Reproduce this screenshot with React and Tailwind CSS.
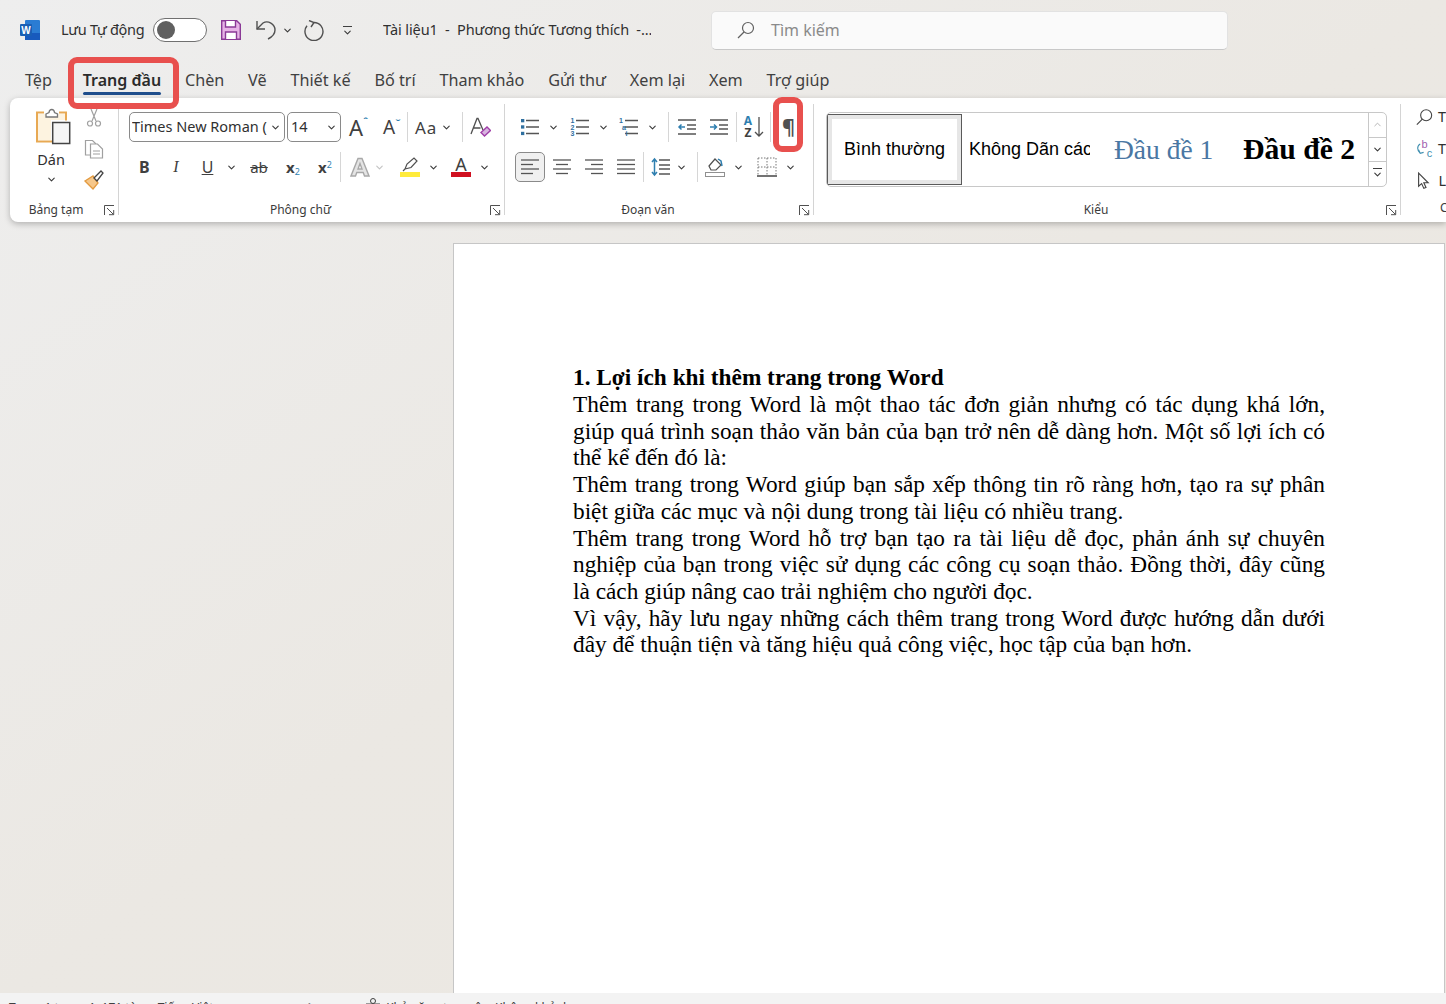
import { ChevronDown } from "lucide-react";

const Chev = ({ className = "" }) => (
  <ChevronDown size={11} strokeWidth={2.4} className={`text-[#3a3a3a] shrink-0 ${className}`} />
);

const Launcher = () => (
  <svg width="11" height="11" viewBox="0 0 11 11" fill="none" stroke="#505050">
    <path d="M.5 10V.5H10M3 3l6.5 6.5M5 9.7h4.7V5" />
  </svg>
);

const Sep = ({ className = "" }) => <div className={`w-px h-[30px] bg-[#d6d6d6] shrink-0 ${className}`} />;

const Group = ({ width, label, className = "", children }) => (
  <div className={`${width} ${className} shrink-0 h-[111px] mt-[6px] border-r border-[#d4d4d4] flex flex-col`}>
    <div className="flex-1 min-h-0">{children}</div>
    <div className="flex items-center h-[12px] pt-[2px] text-[12px] text-[#3b3b3b]">
      <div className="flex-1 text-center">{label}</div>
      <div className="w-[22px] flex justify-end pr-[3px]">
        <Launcher />
      </div>
    </div>
  </div>
);

const Lines = ({ rows }) => (
  <svg width="20" height="20" viewBox="0 0 20 20" fill="none" stroke="#555" strokeWidth="1.3">
    {rows.map((r, i) => (
      <path key={i} d={`M${r[0]} ${r[2]}H${r[1]}`} />
    ))}
  </svg>
);

const ListIcon = ({ kind }) => (
  <svg width="20" height="20" viewBox="0 0 20 20" fill="none">
    <path d="M6 3.5h13M6 10h13M6 16.5h13" stroke="#555" strokeWidth="1.3" />
    {kind === "bullet" && (
      <g fill="#2f6f9f">
        <rect x="1" y="2" width="3.3" height="3.3" />
        <rect x="1" y="8.3" width="3.3" height="3.3" />
        <rect x="1" y="14.8" width="3.3" height="3.3" />
      </g>
    )}
    {kind === "number" && (
      <g fill="#2f6f9f" fontSize="7" fontWeight="700" fontFamily="Liberation Sans" textAnchor="middle">
        <text x="2.5" y="6">1</text>
        <text x="2.5" y="12.5">2</text>
        <text x="2.5" y="19">3</text>
      </g>
    )}
    {kind === "multi" && (
      <g fill="#2f6f9f" fontSize="7" fontWeight="700" fontFamily="Liberation Sans" textAnchor="middle">
        <text x="2" y="6">1</text>
        <text x="5" y="12.5">a</text>
        <text x="7.5" y="19">i</text>
      </g>
    )}
  </svg>
);

const Indent = ({ out }) => (
  <svg width="20" height="20" viewBox="0 0 20 20" fill="none">
    <path d="M1 3h18M10 8h9M10 12h9M1 17h18" stroke="#555" strokeWidth="1.3" />
    <path d={out ? "M8 10H2M4.5 7.5 2 10l2.5 2.5" : "M1 10h6M5 7.5 7.5 10 5 12.5"} stroke="#2f7fb0" strokeWidth="1.5" />
  </svg>
);

const ClipboardGroup = () => (
  <Group width="w-[109px]" label="Bảng tạm" className="pl-[6px]">
    <div className="flex">
      <div className="w-[70px] flex flex-col items-center pt-[3px]">
        <svg className="ml-[6px]" width="38" height="38" viewBox="0 0 38 38" fill="none">
          <path d="M9 5.5H2v29h15" stroke="#e8a953" strokeWidth="2" />
          <path d="M24 5.5h7v8" stroke="#e8a953" strokeWidth="2" />
          <path d="M3 7h27v6H16v20H3z" fill="#fdf3e0" />
          <path d="M11 7l3-1.5c.5-4 5-4 5.5 0l3 1.5v3H11z" fill="#fff" stroke="#777" strokeWidth="1.3" />
          <rect x="17.7" y="15.5" width="17" height="21" fill="#f6f6f6" stroke="#444" strokeWidth="1.5" />
        </svg>
        <span className="text-[14.5px] leading-[20px] text-[#303030] mt-[4px]">Dán</span>
        <Chev className="mt-[5px]" />
      </div>
      <div className="flex flex-col items-center w-[20px] ml-[-2px] pt-[4px]">
        <svg width="20" height="20" viewBox="0 0 20 20" fill="none" stroke="#a0a0a0" strokeWidth="1.2">
          <path d="M7 1l5 12M13 1L8 13" />
          <circle cx="6" cy="15.5" r="2.5" />
          <circle cx="14" cy="15.5" r="2.5" />
        </svg>
        <svg className="mt-[11px]" width="20" height="20" viewBox="0 0 20 20" fill="none" stroke="#a0a0a0" strokeWidth="1.2">
          <path d="M7 16H1.5V1.5h7L12 5" />
          <path d="M6.5 5h7l5 5v9h-12zM9 12h7M9 15h7" fill="#fff" />
        </svg>
        <svg className="mt-[11px]" width="20" height="20" viewBox="0 0 20 20" fill="none">
          <path d="M1 11l8-5 5 7-5 6z" fill="#f6c78a" stroke="#e39a3f" strokeWidth="1.3" />
          <path d="M10 8l7-7 2 2-6 8z" fill="#fff" stroke="#444" strokeWidth="1.3" />
        </svg>
      </div>
    </div>
  </Group>
);

const FontGroup = () => (
  <Group width="w-[386px]" label="Phông chữ">
    <div className="flex items-center h-[38px] pt-[8px] pl-[10px]">
      <div className="w-[156px] h-[30px] border border-[#8a8a8a] rounded-[5px] flex items-center pl-[2px] pr-[3px] text-[14.5px] text-[#303030]">
        <span className="flex-1 overflow-hidden whitespace-nowrap">Times New Roman (I</span>
        <Chev className="ml-[3px]" />
      </div>
      <div className="w-[54px] h-[30px] ml-[2px] border border-[#8a8a8a] rounded-[5px] flex items-center pl-[3px] pr-[3px] text-[14.5px] text-[#303030]">
        <span className="flex-1">14</span>
        <Chev />
      </div>
      <div className="ml-[8px] w-[20px] flex items-start text-[#404040] text-[22px] leading-none">
        A<span className="text-[#2f7fb0] text-[11px] leading-none font-bold">ˆ</span>
      </div>
      <div className="ml-[14px] w-[18px] flex items-start text-[#404040] text-[19px] leading-none">
        A<span className="text-[#2f7fb0] text-[11px] leading-none font-bold">ˇ</span>
      </div>
      <Sep className="ml-[6px]" />
      <div className="ml-[7px] text-[#404040] text-[17px] tracking-[1px] leading-none">Aa</div>
      <Chev className="ml-[4px]" />
      <Sep className="ml-[10px]" />
      <svg className="ml-[7px]" width="21" height="21" viewBox="0 0 21 21" fill="none">
        <path d="M1 17L7 1.5h1L13 13M3.5 11h7" stroke="#505050" strokeWidth="1.3" />
        <path d="M11 15.5l6-5.5 3.5 3.5-6 5.5z" fill="#d8b4e0" stroke="#a03fa8" strokeWidth="1.4" />
      </svg>
    </div>
    <div className="flex items-center h-[30px] mt-[10px] pl-[20px] text-[#404040]">
      <span className="w-[10px] text-[16px] font-bold text-center">B</span>
      <span className="ml-[22px] w-[10px] text-[16px] italic font-['Liberation_Serif',serif] text-center">I</span>
      <span className="ml-[20px] w-[13px] text-[16px] underline text-center">U</span>
      <Chev className="ml-[12px]" />
      <span className="ml-[11px] w-[22px] text-[15px] line-through text-center">ab</span>
      <span className="ml-[16px] w-[18px] text-[15px] font-bold">x<sub className="text-[9px] text-[#2f7fb0] font-normal">2</sub></span>
      <span className="ml-[14px] w-[18px] text-[15px] font-bold">x<sup className="text-[9px] text-[#2f7fb0] font-normal">2</sup></span>
      <Sep className="ml-[4px]" />
      <svg className="ml-[9px]" width="20" height="20" viewBox="0 0 20 20" fill="#e4e4e4" stroke="#a8a8a8" strokeWidth="1.4">
        <path d="M8 1.5h4L19 19h-4.5l-1.3-3.5H6.8L5.5 19H1zM8 12h4l-2-5.5z" fillRule="evenodd" />
      </svg>
      <Chev className="ml-[4px] opacity-30" />
      <div className="ml-[15px] w-[20px] flex flex-col items-center">
        <svg width="20" height="15" viewBox="0 0 20 15" fill="none">
          <path d="M5 12l2-5 7-6 3 3-6 6.5zM3 14l2-2" fill="#fff" stroke="#505050" strokeWidth="1.2" />
        </svg>
        <div className="w-[20px] h-[5px] bg-[#ffeb3b]" />
      </div>
      <Chev className="ml-[8px]" />
      <div className="ml-[12px] w-[20px] flex flex-col items-center">
        <span className="text-[18px] leading-[15px] text-[#404040]">A</span>
        <div className="w-[20px] h-[5px] bg-[#d01020]" />
      </div>
      <Chev className="ml-[8px]" />
    </div>
  </Group>
);

const ParagraphGroup = () => (
  <Group width="w-[309px]" label="Đoạn văn">
    <div className="flex items-center h-[38px] pt-[8px] pl-[15px]">
      <ListIcon kind="bullet" />
      <Chev className="ml-[8px]" />
      <div className="w-[11px]" />
      <ListIcon kind="number" />
      <Chev className="ml-[8px]" />
      <div className="w-[10px]" />
      <ListIcon kind="multi" />
      <Chev className="ml-[8px]" />
      <Sep className="ml-[10px]" />
      <div className="ml-[8px]"><Indent out /></div>
      <div className="ml-[12px]"><Indent /></div>
      <Sep className="ml-[7px]" />
      <span className="ml-[5px] w-[12px] flex flex-col items-center text-[12px] font-bold leading-[12px]">
        <span className="text-[#2f7fb0]">A</span>
        <span className="text-[#404040]">Z</span>
      </span>
      <svg width="10" height="22" viewBox="0 0 10 22" fill="none">
        <path d="M5 1v19M1 16l4 4 4-4" stroke="#505050" strokeWidth="1.3" />
      </svg>
      <Sep className="ml-[6px]" />
      <span className="ml-[11px] text-[20px] leading-none font-bold text-[#505050]">¶</span>
    </div>
    <div className="flex items-center h-[30px] mt-[10px] pl-[10px]">
      <div className="w-[30px] h-[30px] rounded-[5px] border border-[#8a8a8a] bg-[#f0f0f0] flex items-center justify-center">
        <Lines rows={[[1, 19, 3], [1, 13, 7.5], [1, 19, 12], [1, 13, 16.5]]} />
      </div>
      <div className="ml-[7px]"><Lines rows={[[1, 19, 3], [4, 16, 7.5], [1, 19, 12], [4, 16, 16.5]]} /></div>
      <div className="ml-[12px]"><Lines rows={[[1, 19, 3], [7, 19, 7.5], [1, 19, 12], [7, 19, 16.5]]} /></div>
      <div className="ml-[12px]"><Lines rows={[[1, 19, 3], [1, 19, 7.5], [1, 19, 12], [1, 19, 16.5]]} /></div>
      <Sep className="ml-[7px]" />
      <svg className="ml-[7px]" width="20" height="20" viewBox="0 0 20 20" fill="none">
        <path d="M8 3h11M8 8h11M8 12h11M8 17h11" stroke="#555" strokeWidth="1.3" />
        <path d="M3.5 2v16M1 5l2.5-3L6 5M1 15l2.5 3L6 15" stroke="#2f7fb0" strokeWidth="1.5" />
      </svg>
      <Chev className="ml-[5px]" />
      <Sep className="ml-[10px]" />
      <svg className="ml-[7px]" width="20" height="20" viewBox="0 0 20 20" fill="none">
        <path d="M4 9l6-7 6 6-5 5H6z" fill="#fff" stroke="#505050" strokeWidth="1.2" />
        <path d="M13 2l3 2 1 5" stroke="#2f7fb0" strokeWidth="1.5" />
        <rect x="0.5" y="15.5" width="19" height="4" fill="#fff" stroke="#909090" />
      </svg>
      <Chev className="ml-[8px]" />
      <svg className="ml-[13px]" width="20" height="20" viewBox="0 0 20 20" fill="none">
        <path d="M1 1h18M1 10h18M10 1v18M1 1v18M19 1v18" stroke="#777" strokeDasharray="1.5 1.5" />
        <path d="M0 19h20" stroke="#444" strokeWidth="1.5" />
      </svg>
      <Chev className="ml-[8px]" />
    </div>
  </Group>
);

const ScrollBtn = ({ className = "", children }) => (
  <div className={`flex-1 flex items-center justify-center ${className}`}>{children}</div>
);

const StylesGroup = () => (
  <Group width="w-[587px]" label="Kiểu">
    <div className="pt-[8px] pl-[12px]">
      <div className="w-[561px] h-[75px] border border-[#c8c8c8] rounded-[5px] flex items-stretch overflow-hidden font-['Liberation_Sans',sans-serif] text-black">
        <div className="w-[135px] shrink-0 my-[1px] border border-[#5a5a5a] bg-[#e6e6e6] p-[4px]">
          <div className="h-full bg-white flex items-center justify-center text-[18px]">Bình thường</div>
        </div>
        <div className="w-[121px] ml-[7px] flex items-center text-[18px] whitespace-nowrap overflow-hidden shrink-0">Không Dãn các</div>
        <div className="ml-[24px] w-[129px] shrink-0 flex items-center text-[27.5px] whitespace-nowrap text-[#4a77a3] font-['Liberation_Serif',serif]">Đầu đề 1</div>
        <div className="flex-1 flex items-center text-[29.7px] font-bold whitespace-nowrap font-['Liberation_Serif',serif]">Đầu đề 2</div>
        <div className="w-[18px] shrink-0 border-l border-[#c8c8c8] flex flex-col">
          <ScrollBtn className="border-b border-[#c8c8c8]"><ChevronDown size={11} className="rotate-180 text-[#b0b0b0]" /></ScrollBtn>
          <ScrollBtn className="border-b border-[#c8c8c8]"><Chev /></ScrollBtn>
          <ScrollBtn>
            <div className="flex flex-col items-center">
              <div className="w-[9px] h-px bg-[#404040]" />
              <Chev />
            </div>
          </ScrollBtn>
        </div>
      </div>
    </div>
  </Group>
);

const EditGroup = () => (
  <div className="flex-1 h-[111px] mt-[6px] pl-[15px] flex flex-col overflow-hidden text-[14.5px] text-[#303030]">
    <div className="flex items-center h-[22px] mt-[2px]">
      <svg width="20" height="20" viewBox="0 0 20 20" fill="none" stroke="#444" strokeWidth="1.3">
        <circle cx="12" cy="8" r="6.5" />
        <path d="M7.5 12.5 1 19" />
      </svg>
      <span className="ml-[5px]">T</span>
    </div>
    <div className="flex items-center h-[22px] mt-[10px]">
      <svg width="20" height="20" viewBox="0 0 20 20" fill="none">
        <path d="M5 4C1 6 1 12 5 15M3 11l2 4 4-1" stroke="#3f8fb0" strokeWidth="1.3" />
        <text x="10" y="9" fontSize="13" fill="#a05fb0" fontFamily="Liberation Sans" textAnchor="middle">b</text>
        <text x="16" y="19" fontSize="13" fill="#3f8fb0" fontFamily="Liberation Sans" textAnchor="middle">c</text>
      </svg>
      <span className="ml-[5px]">T</span>
    </div>
    <div className="flex items-center h-[22px] mt-[10px]">
      <svg width="20" height="20" viewBox="0 0 20 20" fill="none" stroke="#444" strokeWidth="1.3">
        <path d="M3 1v15l3.5-3 2.5 5.5 2.5-1-2.5-5.5h5z" />
      </svg>
      <span className="ml-[5px]">L</span>
    </div>
    <div className="flex-1 flex items-end text-[12px] text-[#3b3b3b] pl-[10px] leading-[14px]">
      <span className="ml-[14px]">C</span>
    </div>
  </div>
);

const tabs = ["Tệp", "Trang đầu", "Chèn", "Vẽ", "Thiết kế", "Bố trí", "Tham khảo", "Gửi thư", "Xem lại", "Xem", "Trợ giúp"];

const paragraphs = [
  "Thêm trang trong Word là một thao tác đơn giản nhưng có tác dụng khá lớn, giúp quá trình soạn thảo văn bản của bạn trở nên dễ dàng hơn. Một số lợi ích có thể kể đến đó là:",
  "Thêm trang trong Word giúp bạn sắp xếp thông tin rõ ràng hơn, tạo ra sự phân biệt giữa các mục và nội dung trong tài liệu có nhiều trang.",
  "Thêm trang trong Word hỗ trợ bạn tạo ra tài liệu dễ đọc, phản ánh sự chuyên nghiệp của bạn trong việc sử dụng các công cụ soạn thảo. Đồng thời, đây cũng là cách giúp nâng cao trải nghiệm cho người đọc.",
  "Vì vậy, hãy lưu ngay những cách thêm trang trong Word được hướng dẫn dưới đây để thuận tiện và tăng hiệu quả công việc, học tập của bạn hơn.",
];

export default function App() {
  return (
    <div className="relative w-[1446px] h-[1004px] overflow-hidden flex flex-col bg-gradient-to-br from-[#eeeeee] via-[#ebe8e3] to-[#ece8e1] font-['Noto_Sans',sans-serif] text-[#303030]">
      {/* Title bar */}
      <div className="h-[60px] shrink-0 flex items-center pl-[20px] text-[14.5px]">
        <svg width="20" height="20" viewBox="0 0 20 20">
          <rect x="5" y="0" width="15" height="20" rx="1" fill="#2b7cd3" />
          <rect x="5" y="13" width="15" height="7" fill="#185abd" />
          <rect x="0" y="4" width="12" height="12" rx="1" fill="#1a5fb4" />
          <text x="6" y="13.5" textAnchor="middle" fontSize="10" fontWeight="700" fill="#fff" fontFamily="Liberation Sans">W</text>
        </svg>
        <span className="ml-[21px] w-[84px] whitespace-nowrap tracking-[-0.3px]">Lưu Tự động</span>
        <div className="ml-[8px] w-[54px] h-[24px] rounded-full border border-[#707070] bg-white flex items-center pl-[3px]">
          <div className="w-[18px] h-[18px] rounded-full bg-[#606060]" />
        </div>
        <svg className="ml-[14px]" width="20" height="20" viewBox="0 0 20 20" fill="none">
          <path d="M.7.7h15l3.6 3.6v15H.7z" fill="#e6b3e6" stroke="#8a3a96" strokeWidth="1.4" />
          <path d="M4.5 1v6h10V1M4.5 19v-7h11v7" fill="#fff" stroke="#8a3a96" strokeWidth="1.4" />
        </svg>
        <svg className="ml-[15px]" width="20" height="20" viewBox="0 0 20 20" fill="none" stroke="#505050" strokeWidth="1.4">
          <path d="M1 1v8h8" />
          <path d="M1 9l6-6c5-3 12 1 12 7 0 4-3 7-7 9" />
        </svg>
        <Chev className="ml-[6px]" />
        <svg className="ml-[11px]" width="21" height="21" viewBox="0 0 21 21" fill="none" stroke="#505050" strokeWidth="1.4">
          <path d="M10 2.5a9 9 0 1 1-7 3.3" />
          <path d="M5 .5l5 2-3 4.5" />
        </svg>
        <div className="ml-[17px] w-[10px] flex flex-col items-center mt-[3px]">
          <div className="w-[9px] h-px bg-[#404040]" />
          <Chev />
        </div>
        <span className="ml-[31px] w-[268px] whitespace-pre overflow-hidden tracking-[-0.1px]">Tài liệu1  -  Phương thức Tương thích  -...</span>
        <div className="ml-[60px] w-[517px] h-[39px] rounded-[5px] bg-[#fafafa] border border-[#e2e2e2] border-b-[#c8c8c8] flex items-center pl-[25px] text-[16px] text-[#8a8a8a]">
          <svg width="18" height="18" viewBox="0 0 18 18" fill="none" stroke="#606060" strokeWidth="1.2">
            <circle cx="11" cy="7" r="5.5" />
            <path d="M7 11l-6 6" />
          </svg>
          <span className="ml-[16px]">Tìm kiếm</span>
        </div>
      </div>

      {/* Tabs */}
      <div className="h-[38px] shrink-0 flex items-start pl-[25px] gap-[23.8px] text-[16.2px] leading-[40px] text-[#404040]">
        {tabs.map((t) =>
          t === "Trang đầu" ? (
            <div key={t} className="relative ml-[7px] font-semibold text-[16px] text-[#2b2b2b]">
              {t}
              <div className="absolute left-0 right-0 top-[32px] h-[3px] rounded-sm bg-[#1f4e8c]" />
            </div>
          ) : (
            <div key={t}>{t}</div>
          )
        )}
      </div>

      {/* Ribbon */}
      <div className="h-[124px] shrink-0 ml-[10px] bg-white rounded-l-[8px] shadow-[0_2px_6px_rgba(0,0,0,0.25)] flex">
        <ClipboardGroup />
        <FontGroup />
        <ParagraphGroup />
        <StylesGroup />
        <EditGroup />
      </div>

      {/* Document */}
      <div className="flex-1 min-h-0 pl-[453px] pr-[1px] pt-[21px] overflow-hidden">
        <div className="h-[900px] bg-white border border-[#c6c6c6] pl-[119px] pr-[119px] pt-[120.3px] font-['Liberation_Serif',serif] text-[23.3px] leading-[26.7px] text-black">
          <p className="font-bold">1. Lợi ích khi thêm trang trong Word</p>
          {paragraphs.map((p) => (
            <p key={p} className="text-justify">{p}</p>
          ))}
        </div>
      </div>

      {/* Status bar, cut off by the bottom of the window */}
      <div className="h-[11px] shrink-0 bg-[#f3f3f3] overflow-hidden flex items-start pl-[9px] pt-[6px] text-[12px] leading-[18px] text-[#404040] whitespace-nowrap">
        <span>Trang 1 trong 1</span>
        <span className="ml-[6px]">171 từ</span>
        <span className="ml-[20px]">Tiếng Việt</span>
        <span className="ml-[24px] text-[10px]">Dự đoán văn bản: Bật</span>
        <svg className="ml-[26px] mt-[-1px]" width="16" height="16" viewBox="0 0 16 16" fill="none" stroke="#404040">
          <circle cx="8" cy="3" r="2.5" />
          <path d="M1 6h14v4H1z" />
        </svg>
        <span className="ml-[5px]">Khả năng truy cập: Không khả dụng</span>
      </div>

      {/* Red highlights */}
      <div className="absolute left-[68px] top-[57px] w-[111px] h-[52px] rounded-[9px] border-[6px] border-[#e8504e]" />
      <div className="absolute left-[773px] top-[97px] w-[30px] h-[55px] rounded-[9px] border-[6px] border-[#e8504e]" />
    </div>
  );
}
